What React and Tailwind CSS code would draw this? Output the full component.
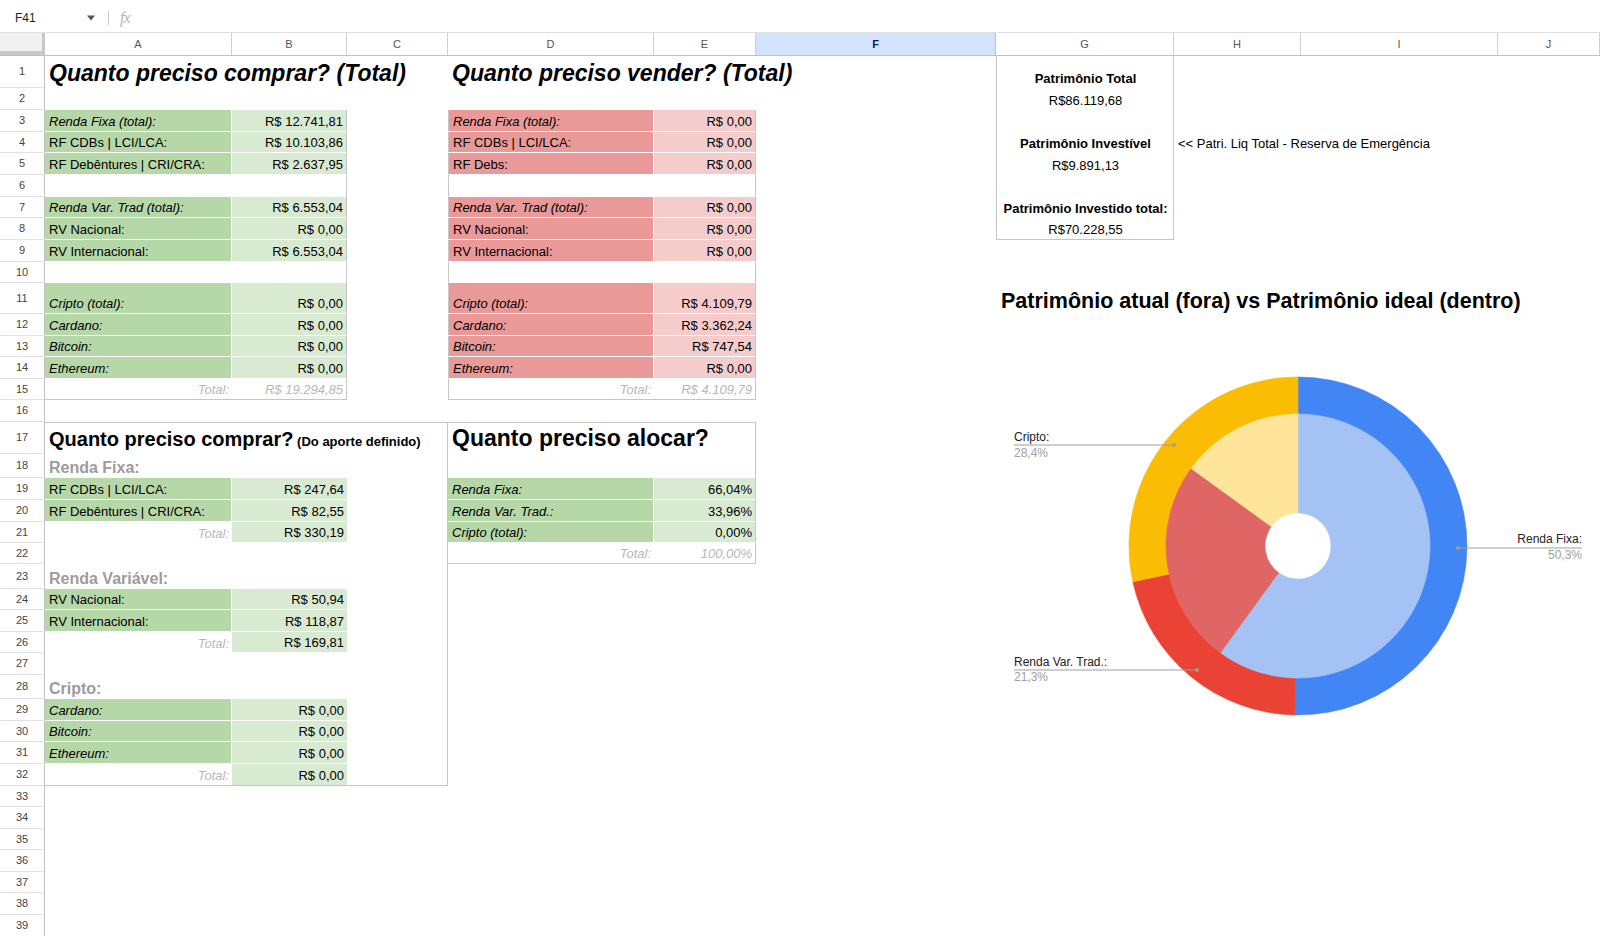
import React from 'react';

const COLS = ['A', 'B', 'C', 'D', 'E', 'F', 'G', 'H', 'I', 'J'];
const W = {
  A: 'w-[187px]', B: 'w-[115px]', C: 'w-[101px]', D: 'w-[206px]', E: 'w-[102px]',
  F: 'w-[240px]', G: 'w-[178px]', H: 'w-[127px]', I: 'w-[197px]', J: 'w-[102px]',
};
const HC = { 21: 'h-[21px]', 22: 'h-[22px]', 24: 'h-[24px]', 25: 'h-[25px]', 31: 'h-[31px]', 32: 'h-[32px]' };
const heights = [32, 22, 22, 21, 22, 22, 21, 22, 22, 21, 31, 22, 21, 22, 21, 22, 32, 24, 22, 22, 21, 21, 25, 21, 22, 21, 22, 24, 22, 21, 22, 22, 21, 22, 21, 22, 21, 22, 22];

const TR = 'border-r border-r-[#c6c6c6]';
const TB = 'border-b border-b-[#c6c6c6]';
const TL = 'border-l border-l-[#c6c6c6]';
const TT = 'border-t border-t-[#c6c6c6]';

const gl = 'bg-[#b6d7a8] border-b border-b-white border-r border-r-white';
const gli = gl + ' italic';
const gv = 'bg-[#d9ead3] justify-end border-b border-b-white';
const rl = 'bg-[#ea9999] border-b border-b-white border-r border-r-white';
const rli = rl + ' italic';
const rv = 'bg-[#f4cccc] justify-end border-b border-b-white';
const tot = 'justify-end italic text-[#b7b7b7]';
const sec = 'text-[16px] leading-[18px] font-bold text-[#9c9c9c]';
const big = 'text-[23px] leading-[28px] font-bold';
const gbox = 'justify-center ' + TL + ' ' + TR;

const data = {
  1: {
    A: { t: 'Quanto preciso comprar? (Total)', c: big + ' italic' },
    D: { t: 'Quanto preciso vender? (Total)', c: big + ' italic' },
    G: { t: 'Patrimônio Total', c: gbox + ' font-bold' },
  },
  2: { G: { t: 'R$86.119,68', c: gbox } },
  3: {
    A: { t: 'Renda Fixa (total):', c: gli },
    B: { t: 'R$ 12.741,81', c: gv + ' ' + TR },
    D: { t: 'Renda Fixa (total):', c: rli + ' ' + TL },
    E: { t: 'R$ 0,00', c: rv + ' ' + TR },
    G: { c: gbox },
  },
  4: {
    A: { t: 'RF CDBs | LCI/LCA:', c: gl },
    B: { t: 'R$ 10.103,86', c: gv + ' ' + TR },
    D: { t: 'RF CDBs | LCI/LCA:', c: rl + ' ' + TL },
    E: { t: 'R$ 0,00', c: rv + ' ' + TR },
    G: { t: 'Patrimônio Investível', c: gbox + ' font-bold' },
    H: { t: '<< Patri. Liq Total - Reserva de Emergência' },
  },
  5: {
    A: { t: 'RF Debêntures | CRI/CRA:', c: gl },
    B: { t: 'R$ 2.637,95', c: gv + ' ' + TR },
    D: { t: 'RF Debs:', c: rl + ' ' + TL },
    E: { t: 'R$ 0,00', c: rv + ' ' + TR },
    G: { t: 'R$9.891,13', c: gbox },
  },
  6: { B: { c: TR }, D: { c: TL }, E: { c: TR }, G: { c: gbox } },
  7: {
    A: { t: 'Renda Var. Trad (total):', c: gli },
    B: { t: 'R$ 6.553,04', c: gv + ' ' + TR },
    D: { t: 'Renda Var. Trad (total):', c: rli + ' ' + TL },
    E: { t: 'R$ 0,00', c: rv + ' ' + TR },
    G: { t: 'Patrimônio Investido total:', c: gbox + ' font-bold' },
  },
  8: {
    A: { t: 'RV Nacional:', c: gl },
    B: { t: 'R$ 0,00', c: gv + ' ' + TR },
    D: { t: 'RV Nacional:', c: rl + ' ' + TL },
    E: { t: 'R$ 0,00', c: rv + ' ' + TR },
    G: { t: 'R$70.228,55', c: gbox + ' ' + TB },
  },
  9: {
    A: { t: 'RV Internacional:', c: gl },
    B: { t: 'R$ 6.553,04', c: gv + ' ' + TR },
    D: { t: 'RV Internacional:', c: rl + ' ' + TL },
    E: { t: 'R$ 0,00', c: rv + ' ' + TR },
  },
  10: { B: { c: TR }, D: { c: TL }, E: { c: TR } },
  11: {
    A: { t: 'Cripto (total):', c: gli },
    B: { t: 'R$ 0,00', c: gv + ' ' + TR },
    D: { t: 'Cripto (total):', c: rli + ' ' + TL },
    E: { t: 'R$ 4.109,79', c: rv + ' ' + TR },
  },
  12: {
    A: { t: 'Cardano:', c: gli },
    B: { t: 'R$ 0,00', c: gv + ' ' + TR },
    D: { t: 'Cardano:', c: rli + ' ' + TL },
    E: { t: 'R$ 3.362,24', c: rv + ' ' + TR },
  },
  13: {
    A: { t: 'Bitcoin:', c: gli },
    B: { t: 'R$ 0,00', c: gv + ' ' + TR },
    D: { t: 'Bitcoin:', c: rli + ' ' + TL },
    E: { t: 'R$ 747,54', c: rv + ' ' + TR },
  },
  14: {
    A: { t: 'Ethereum:', c: gli },
    B: { t: 'R$ 0,00', c: gv + ' ' + TR },
    D: { t: 'Ethereum:', c: rli + ' ' + TL },
    E: { t: 'R$ 0,00', c: rv + ' ' + TR },
  },
  15: {
    A: { t: 'Total:', c: tot + ' ' + TB },
    B: { t: 'R$ 19.294,85', c: tot + ' ' + TB + ' ' + TR },
    D: { t: 'Total:', c: tot + ' ' + TB + ' ' + TL },
    E: { t: 'R$ 4.109,79', c: tot + ' ' + TB + ' ' + TR },
  },
  17: {
    A: {
      t: (
        <>
          <span className="text-[20px] leading-[28px]">Quanto preciso comprar?</span>
          <span className="text-[13px]"> (Do aporte definido)</span>
        </>
      ),
      c: 'font-bold ' + TT,
    },
    B: { c: TT },
    C: { c: TT + ' ' + TR },
    D: { t: 'Quanto preciso alocar?', c: 'text-[23px] leading-[29px] font-bold ' + TT },
    E: { c: TT + ' ' + TR },
  },
  18: { A: { t: 'Renda Fixa:', c: sec }, C: { c: TR }, E: { c: TR } },
  19: {
    A: { t: 'RF CDBs | LCI/LCA:', c: gl },
    B: { t: 'R$ 247,64', c: gv },
    C: { c: TR },
    D: { t: 'Renda Fixa:', c: gli },
    E: { t: '66,04%', c: gv + ' ' + TR },
  },
  20: {
    A: { t: 'RF Debêntures | CRI/CRA:', c: gl },
    B: { t: 'R$ 82,55', c: gv },
    C: { c: TR },
    D: { t: 'Renda Var. Trad.:', c: gli },
    E: { t: '33,96%', c: gv + ' ' + TR },
  },
  21: {
    A: { t: 'Total:', c: tot },
    B: { t: 'R$ 330,19', c: gv },
    C: { c: TR },
    D: { t: 'Cripto (total):', c: gli },
    E: { t: '0,00%', c: gv + ' ' + TR },
  },
  22: {
    C: { c: TR },
    D: { t: 'Total:', c: tot + ' ' + TB },
    E: { t: '100,00%', c: tot + ' ' + TB + ' ' + TR },
  },
  23: { A: { t: 'Renda Variável:', c: sec }, C: { c: TR } },
  24: { A: { t: 'RV Nacional:', c: gl }, B: { t: 'R$ 50,94', c: gv }, C: { c: TR } },
  25: { A: { t: 'RV Internacional:', c: gl }, B: { t: 'R$ 118,87', c: gv }, C: { c: TR } },
  26: { A: { t: 'Total:', c: tot }, B: { t: 'R$ 169,81', c: gv }, C: { c: TR } },
  27: { C: { c: TR } },
  28: { A: { t: 'Cripto:', c: sec }, C: { c: TR } },
  29: { A: { t: 'Cardano:', c: gli }, B: { t: 'R$ 0,00', c: gv }, C: { c: TR } },
  30: { A: { t: 'Bitcoin:', c: gli }, B: { t: 'R$ 0,00', c: gv }, C: { c: TR } },
  31: { A: { t: 'Ethereum:', c: gli }, B: { t: 'R$ 0,00', c: gv }, C: { c: TR } },
  32: {
    A: { t: 'Total:', c: tot + ' ' + TB },
    B: { t: 'R$ 0,00', c: 'bg-[#d9ead3] justify-end ' + TB },
    C: { c: TR + ' ' + TB },
  },
};

function Cell({ col, spec }) {
  const s = spec || {};
  return (
    <div
      className={`${W[col]} shrink-0 flex items-end pb-[1px] pl-[4px] pr-[3px] whitespace-nowrap text-[13px] leading-[16px] ${s.c || ''}`}
    >
      {s.t !== undefined && <span>{s.t}</span>}
    </div>
  );
}

function Row({ n, h }) {
  const cells = data[n] || {};
  return (
    <div className={`flex ${HC[h]}`}>
      <div className="w-[45px] shrink-0 flex items-center justify-center border-r border-r-[#c0c0c0] border-b border-b-[#e2e2e2] text-[11px] text-[#444]">
        {n}
      </div>
      {COLS.map((k) => (
        <Cell key={k} col={k} spec={cells[k]} />
      ))}
    </div>
  );
}

function seg(cx, cy, r0, r1, f0, f1) {
  const a0 = f0 * 2 * Math.PI;
  const a1 = f1 * 2 * Math.PI;
  const p = (r, a) => [cx + r * Math.sin(a), cy - r * Math.cos(a)];
  const large = f1 - f0 > 0.5 ? 1 : 0;
  const [x0, y0] = p(r1, a0);
  const [x1, y1] = p(r1, a1);
  const [x2, y2] = p(r0, a1);
  const [x3, y3] = p(r0, a0);
  return `M${x0} ${y0} A${r1} ${r1} 0 ${large} 1 ${x1} ${y1} L${x2} ${y2} A${r0} ${r0} 0 ${large} 0 ${x3} ${y3} Z`;
}

function Chart() {
  const cx = 1298;
  const cy = 546;
  const outer = [
    [0, 0.503, '#4285f4'],
    [0.503, 0.716, '#ea4335'],
    [0.716, 1, '#fbbc04'],
  ];
  const inner = [
    [0, 0.6, '#a4c2f4'],
    [0.6, 0.85, '#e06666'],
    [0.85, 1, '#ffe599'],
  ];
  return (
    <div className="absolute left-[996px] top-[260px] w-[604px] h-[500px]">
      <svg width="604" height="500" viewBox="996 260 604 500" fontFamily="'Liberation Sans', Arial, sans-serif">
        <text x="1001" y="307.5" fontSize="21.5" fontWeight="bold" fill="#000">
          Patrimônio atual (fora) vs Patrimônio ideal (dentro)
        </text>
        {outer.map(([a, b, col]) => (
          <path key={'o' + a} d={seg(cx, cy, 131.5, 169, a, b)} fill={col} stroke={col} strokeWidth="0.6" />
        ))}
        {inner.map(([a, b, col]) => (
          <path key={'i' + a} d={seg(cx, cy, 33, 132, a, b)} fill={col} stroke={col} strokeWidth="0.6" />
        ))}
        <g stroke="#9e9e9e" strokeWidth="1">
          <line x1="1014" y1="445" x2="1174" y2="445" />
          <line x1="1014" y1="670" x2="1197" y2="670" />
          <line x1="1458" y1="548" x2="1582" y2="548" />
        </g>
        <g fill="#9e9e9e">
          <circle cx="1174" cy="445" r="2" />
          <circle cx="1197" cy="670" r="2" />
          <circle cx="1458" cy="548" r="2" />
        </g>
        <g fontSize="12">
          <text x="1014" y="441" fill="#222">Cripto:</text>
          <text x="1014" y="457" fill="#a0a0a0">28,4%</text>
          <text x="1014" y="666" fill="#222">Renda Var. Trad.:</text>
          <text x="1014" y="681" fill="#a0a0a0">21,3%</text>
          <text x="1582" y="543" fill="#222" textAnchor="end">Renda Fixa:</text>
          <text x="1582" y="559" fill="#a0a0a0" textAnchor="end">50,3%</text>
        </g>
      </svg>
    </div>
  );
}

export default function App() {
  return (
    <div className="relative w-[1600px] h-[936px] overflow-hidden bg-white text-black font-['Liberation_Sans',Arial,sans-serif]">
      {/* formula bar */}
      <div className="h-[33px] pt-[4px] flex items-center border-b border-b-[#e0e0e0]">
        <div className="w-[72px] pl-[15px] text-[12px] text-[#1f1f1f]">F41</div>
        <svg width="10" height="6" viewBox="0 0 10 6" className="ml-[14px]">
          <path d="M1 0.5 L9 0.5 L5 5.5 Z" fill="#555" />
        </svg>
        <div className="ml-[12px] w-px h-[14px] bg-[#c7c7c7]" />
        <div className="ml-[11px] text-[16px] italic text-[#b4b4b4] font-['Liberation_Serif',serif] tracking-[-1px]">fx</div>
      </div>
      {/* column header */}
      <div className="flex h-[23px] border-b border-b-[#c0c0c0]">
        <div className="w-[45px] shrink-0 bg-[#f1f1f1] border-r-[3px] border-r-[#c8c8c8] border-b-[4px] border-b-[#c8c8c8]" />
        {COLS.map((k) =>
          k === 'F' ? (
            <div
              key={k}
              className={`${W[k]} shrink-0 flex items-center justify-center bg-[#d3e3fd] border-r border-r-[#c0c0c0] text-[11px] font-bold text-[#041e49]`}
            >
              {k}
            </div>
          ) : (
            <div
              key={k}
              className={`${W[k]} shrink-0 flex items-center justify-center border-r border-r-[#d0d0d0] text-[11px] text-[#555]`}
            >
              {k}
            </div>
          )
        )}
      </div>
      {/* rows */}
      <div className="flex flex-col">
        {heights.map((h, i) => (
          <Row key={i} n={i + 1} h={h} />
        ))}
      </div>
      <Chart />
    </div>
  );
}
